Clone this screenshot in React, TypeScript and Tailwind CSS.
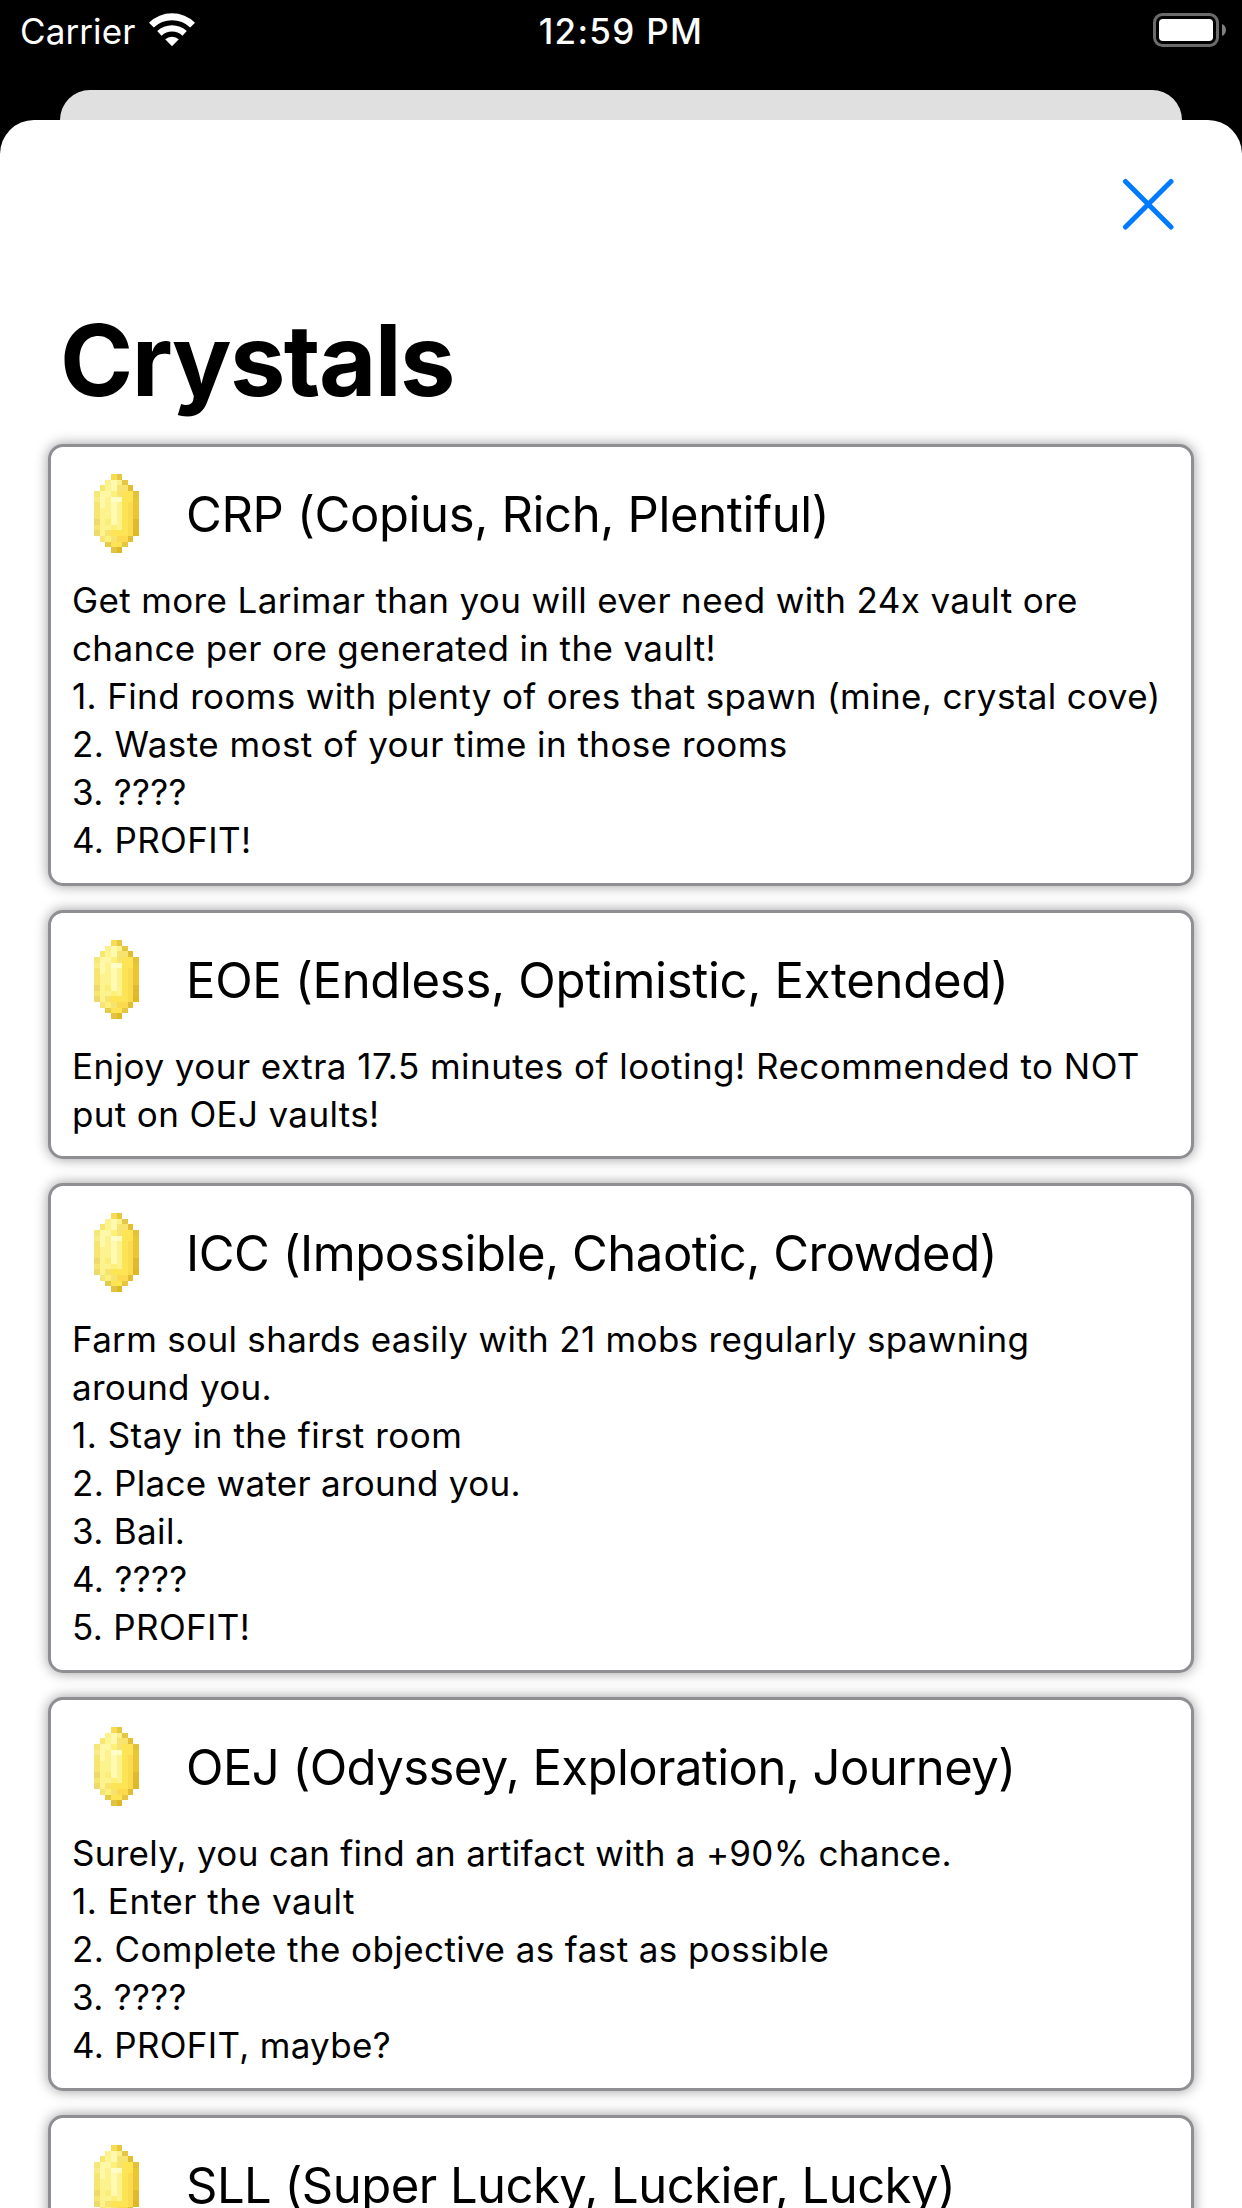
type Line = { text: string; tracking?: string };
type Crystal = { title: string; tracking: string; bottom: string; lines: Line[] };

const CRYSTALS: Crystal[] = [
  {
    title: "CRP (Copius, Rich, Plentiful)",
    tracking: "tracking-[-0.36px]",
    bottom: "pb-[19px]",
    lines: [
      { text: "Get more Larimar than you will ever need with 24x vault ore" },
      { text: "chance per ore generated in the vault!" },
      { text: "1. Find rooms with plenty of ores that spawn (mine, crystal cove)" },
      { text: "2. Waste most of your time in those rooms", tracking: "tracking-[0.44px]" },
      { text: "3. ????" },
      { text: "4. PROFIT!" },
    ],
  },
  {
    title: "EOE (Endless, Optimistic, Extended)",
    tracking: "tracking-[-0.3px]",
    bottom: "pb-[18px]",
    lines: [
      {
        text: "Enjoy your extra 17.5 minutes of looting! Recommended to NOT",
        tracking: "tracking-[0.47px]",
      },
      { text: "put on OEJ vaults!" },
    ],
  },
  {
    title: "ICC (Impossible, Chaotic, Crowded)",
    tracking: "tracking-[-0.46px]",
    bottom: "pb-[19px]",
    lines: [
      { text: "Farm soul shards easily with 21 mobs regularly spawning", tracking: "tracking-[0.32px]" },
      { text: "around you.", tracking: "tracking-[0.3px]" },
      { text: "1. Stay in the first room", tracking: "tracking-[0.5px]" },
      { text: "2. Place water around you.", tracking: "tracking-[0.28px]" },
      { text: "3. Bail." },
      { text: "4. ????" },
      { text: "5. PROFIT!" },
    ],
  },
  {
    title: "OEJ (Odyssey, Exploration, Journey)",
    tracking: "tracking-[-0.57px]",
    bottom: "pb-[19px]",
    lines: [
      { text: "Surely, you can find an artifact with a +90% chance.", tracking: "tracking-[0.28px]" },
      { text: "1. Enter the vault", tracking: "tracking-[0.55px]" },
      { text: "2. Complete the objective as fast as possible", tracking: "tracking-[0.41px]" },
      { text: "3. ????" },
      { text: "4. PROFIT, maybe?", tracking: "tracking-[0.3px]" },
    ],
  },
  {
    title: "SLL (Super Lucky, Luckier, Lucky)",
    tracking: "tracking-[-0.53px]",
    bottom: "pb-[19px]",
    lines: [],
  },
];

/* One entry per pixel row; "-" is transparent. */
const PIXELS = [
  "- - - F9DB52 E5C740 - - -",
  "- - FCF18C FFF9B0 FCF18C E4C642 - -",
  "- F7E670 FCF48E FFF9B0 F7E470 F7E470 E4BE30 -",
  "F6E878 FDF7A6 FDF7A6 FDF07A F7E470 FDE454 FDE454 E3C138",
  "F9EC86 FDF8AC FCF28E FFFBCC FFFCC0 FDE454 FDE454 EAC632",
  "F6E56E FDF8AC FCF28E FFF9B4 FCF28E FDE454 FBDA50 EAC632",
  "F6E56E FCF28E FCF28E FFF9B4 FCF28E FDE454 FBDA50 EAC632",
  "F6E56E FCF28E FCF28E FFF9B4 FCF28E FDE454 FBDA50 EAC632",
  "EDD96C FCF28E FBEE78 FFF9B4 FCF28E FDE454 FBDA50 DFBA2C",
  "F6E56E FCF28E FCF28E FDF07A FCF28E FDE454 FBDA50 DFBA2C",
  "EDD96C FCF28E F7E470 FDE454 FDE454 FDE454 FBDA50 DDB926",
  "- F7E478 FDF07A F7E470 FBDA50 FBDA50 E2BE34 -",
  "- - E6CB4A FDE454 FDE454 E6C640 - -",
  "- - - E2C440 DDB926 - - -",
];

function CrystalIcon() {
  return (
    <svg
      viewBox="0 0 8 14"
      preserveAspectRatio="none"
      shapeRendering="crispEdges"
      className="mb-[2px] h-[79px] w-[45px] shrink-0"
    >
      {PIXELS.flatMap((row, y) =>
        row.split(" ").map((c, x) =>
          c === "-" ? null : <rect key={`${x}-${y}`} x={x} y={y} width="1" height="1" fill={`#${c}`} />,
        ),
      )}
    </svg>
  );
}

function StatusBar() {
  return (
    <div className="grid h-[90px] grid-cols-3 items-start text-[35px] leading-[62px] text-white">
      <div className="flex pl-5">
        <span className="tracking-[0.1px]">Carrier</span>
        <svg viewBox="0 0 46 34" className="mt-[13px] ml-[14px] h-[34px] w-[46px]" fill="#fff">
          <path d="M0 9.7A33 33 0 0 1 46 9.7L41.2 14.6A26 26 0 0 0 4.8 14.6Z" />
          <path d="M8.2 18A21.8 21.8 0 0 1 37.8 18L33.4 22.7A15 15 0 0 0 12.6 22.7Z" />
          <path d="M16.2 26.3A10 10 0 0 1 29.8 26.3L23 33.2Z" />
        </svg>
      </div>
      <div className="text-center font-medium tracking-[1.3px]">12:59 PM</div>
      <div className="flex justify-end pt-[13px] pr-4">
        <svg viewBox="0 0 73 34" className="h-[34px] w-[73px]">
          <rect x="1.5" y="1.5" width="63" height="31" rx="8" fill="none" stroke="#6b6b6b" strokeWidth="3" />
          <rect x="6" y="6" width="54" height="22" rx="4" fill="#fff" />
          <path d="M69 11C74.300 13 74.300 21 69 23Z" fill="#808080" />
        </svg>
      </div>
    </div>
  );
}

function Card({ title, tracking, bottom, lines }: Crystal) {
  return (
    <section
      className={`rounded-[15px] border-[3px] border-[#8e8e93] bg-white pt-[18px] pl-[21px] shadow-[0_0_13px_rgba(0,0,0,0.4)] ${bottom}`}
    >
      <div className="mb-[13px] flex h-[98px] items-center pl-[22px]">
        <CrystalIcon />
        <h2 className={`ml-[47px] pt-px text-[49px] leading-[60px] whitespace-nowrap ${tracking}`}>{title}</h2>
      </div>
      {lines.map((line) => (
        <p key={line.text} className={`text-[35px] leading-[48px] whitespace-nowrap ${line.tracking ?? "tracking-[0.36px]"}`}>
          {line.text}
        </p>
      ))}
    </section>
  );
}

export default function App() {
  return (
    <div className="h-[2208px] w-[1242px] overflow-hidden bg-black font-['Inter',sans-serif] text-black">
      <StatusBar />
      <div className="mx-[60px] h-[30px] rounded-t-[30px] bg-[#e0e0e0]" />
      <main className="h-[2088px] overflow-hidden rounded-t-[34px] bg-white">
        <div className="flex justify-end pt-[58px] pr-[68px]">
          <button aria-label="Close">
            <svg viewBox="0 0 52 52" className="block h-[52px] w-[52px]" stroke="#007aff" strokeWidth="5" strokeLinecap="round">
              <path d="M3.500 3.500L49 49M49 3.500L3.500 49" />
            </svg>
          </button>
        </div>
        <h1 className="mt-[70px] ml-[60px] text-[99px] leading-[120px] font-bold tracking-[-1.6px]">Crystals</h1>
        <div className="mx-[48px] mt-6 flex flex-col gap-6">
          {CRYSTALS.map((c) => (
            <Card key={c.title} {...c} />
          ))}
        </div>
      </main>
    </div>
  );
}
